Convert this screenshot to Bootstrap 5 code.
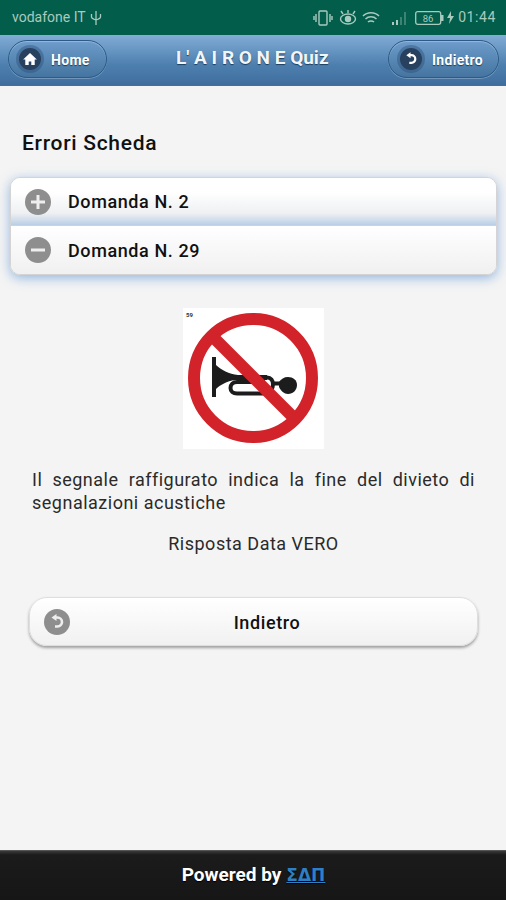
<!DOCTYPE html>
<html>
  <head>
    <title>L'AIRONE Quiz</title>
    <link href="https://cdn.jsdelivr.net/npm/bootstrap@5.3.3/dist/css/bootstrap.min.css" rel="stylesheet" />
    <style>
      body {
        width: 506px;
        height: 900px;
        overflow: hidden;
        background: #f4f4f4;
        font-family: Roboto, "Liberation Sans", sans-serif;
      }
      .status-strip {
        height: 35px;
        background: #025d4b;
        color: #a9cabf;
        font-size: 14px;
        padding: 0 10px 0 12px;
      }
      .status-strip svg { display: block; }
      .status-time { font-size: 14px; letter-spacing: .6px; }
      .status-vib { margin-left: 1px; }
      .status-eye { margin-left: 6px; }
      .status-wifi { margin-left: 5px; }
      .status-signal { margin-left: 11px; }
      .status-batt { margin-left: 6px; }
      .status-bolt { margin-left: 3px; }
      .top-bar {
        height: 51px;
        background: linear-gradient(#81add6, #4d7fae 60%, #3f6e9d);
        border-bottom: 1px solid #456f97;
        padding: 0 7px 3px 8px;
      }
      .bar-btn {
        height: 38px;
        border: 1px solid #2c5b88;
        border-radius: 19px;
        box-shadow: inset 0 1px 1px rgba(255,255,255,.3), 0 1px 0 rgba(255,255,255,.25);
        background: linear-gradient(#6d9ccb, #44749f);
        color: #fff;
        font-size: 14px;
        font-weight: 700;
        letter-spacing: .3px;
        text-shadow: 0 1px 1px #1c3d5c;
        padding: 0 16px 0 10px;
      }
      .bar-btn-right { padding: 0 15px 0 11px; }
      .bar-label { padding-top: 3px; }
      .dark-dot {
        width: 22px;
        height: 22px;
        border-radius: 50%;
        background: #27415f;
        box-shadow: 0 0 0 3px rgba(40,75,115,.4);
        flex: none;
        margin-right: 2px;
      }
      .bar-title {
        margin-left: 10px;
        color: #f2f6fa;
        font-size: 19px;
        font-weight: 700;
        text-shadow: 0 1px 1px #1c3d5c;
        white-space: nowrap;
      }
      .page-area { height: 764px; padding: 0 9px 0 10px; }
      .page-heading {
        margin: 0;
        padding: 45px 0 0 12px;
        height: 91px;
        font-size: 21px;
        font-weight: 500;
        letter-spacing: .7px;
        line-height: 24px;
        color: #111;
      }
      .quiz-list {
        border: 1px solid #d4d4d4;
        border-radius: 10px;
        box-shadow: 0 3px 12px rgba(80,140,210,.6);
        overflow: hidden;
      }
      .quiz-row {
        height: 48px;
        padding-left: 14px;
        font-size: 18px;
        font-weight: 500;
        letter-spacing: .6px;
        color: #111;
        background: linear-gradient(#fff, #f0f0f0);
      }
      .quiz-row-closed {
        background: linear-gradient(#fff 30%, #eef0f2 75%, #b9cfe6);
        border-bottom: 1px solid #c8d4e0;
      }
      .grey-dot {
        width: 26px;
        height: 26px;
        border-radius: 50%;
        background: #8e8e8e;
        flex: none;
        margin-right: 17px;
      }
      .sign-box {
        width: 141px;
        height: 141px;
        margin: 33px auto 0;
        background: #fff;
      }
      .sign-box svg { display: block; }
      .question-text {
        margin: 19px 22px 0;
        font-size: 18px;
        letter-spacing: .5px;
        line-height: 23px;
        text-align: justify;
        color: #2a2a2a;
        font-weight: 400;
      }
      .given-answer {
        margin: 18px 0 0;
        text-align: center;
        font-size: 18px;
        letter-spacing: .5px;
        line-height: 23px;
        color: #2a2a2a;
      }
      .back-wide {
        width: 449px;
        height: 49px;
        margin: 42px 0 0 19px;
        padding: 1px 13px 0 14px;
        border-radius: 18px;
        border: 1px solid #dedede;
        background: linear-gradient(#fff, #f1f1f1);
        box-shadow: 0 2px 3px rgba(0,0,0,.35);
        font-size: 18px;
        font-weight: 500;
        letter-spacing: .6px;
        color: #111;
      }
      .back-wide .grey-dot { margin: 0; }
      .back-label { flex: 1; text-align: center; }
      .bottom-bar {
        height: 50px;
        padding-left: 1px;
        background: linear-gradient(#3a3a3a, #1b1b1b 8%, #161616);
        border-top: 1px solid #555;
        color: #fff;
        font-size: 19px;
        font-weight: 700;
        text-shadow: 0 1px 1px #000;
      }
      .bottom-bar a { color: #2f7fc4; margin-left: 5px; font-family: "DejaVu Sans", sans-serif; font-size: 17px; }
    </style>
  </head>
  <body>
    <div class="status-strip d-flex align-items-center">
      <span>vodafone IT</span>
      <svg class="ms-1" width="12" height="16" viewBox="0 0 12 16" fill="none" stroke="#a9cabf" stroke-width="1.3"><path d="M6 1v14M1.500 4v3c0 1.500 4.500 3 4.500 3s4.500-1.500 4.500-3V4"/></svg>
      <div class="ms-auto d-flex align-items-center">
        <svg class="status-vib" width="20" height="16" viewBox="0 0 20 16" fill="none" stroke="#a9cabf" stroke-width="1.4"><rect x="6" y="1" width="8" height="14" rx="1"/><path d="M3 4v8M1 6v4M17 4v8M19 6v4"/></svg>
        <svg class="status-eye" width="18" height="16" viewBox="0 0 18 16" fill="none" stroke="#a9cabf" stroke-width="1.4"><ellipse cx="9" cy="9" rx="7.500" ry="5"/><circle cx="9" cy="9" r="2.500" fill="#a9cabf"/><path d="M4 4 2 1M9 3V0M14 4l2-3"/></svg>
        <svg class="status-wifi" width="18" height="16" viewBox="0 0 18 16" fill="none" stroke="#a9cabf" stroke-width="1.500"><path d="M1 6c4-4.500 12-4.500 16 0M3.500 9c3-3 8-3 11 0M6 12c1.500-1.500 4.500-1.500 6 0"/></svg>
        <svg class="status-signal" width="18" height="14" viewBox="0 0 18 14" fill="#a9cabf"><rect x="1" y="11" width="2" height="3"/><rect x="5" y="9" width="2" height="5"/><path d="M9 6h2v8H9zM13 1h2v13h-2z" opacity=".35"/></svg>
        <svg class="status-batt" width="29" height="14" viewBox="0 0 29 14"><rect x=".7" y=".7" width="25" height="12.600" rx="2" fill="none" stroke="#a9cabf" stroke-width="1.300"/><rect x="26" y="4" width="2.500" height="6" fill="#a9cabf"/><text x="13" y="10.500" font-size="9.500" text-anchor="middle" fill="#a9cabf" font-family="Roboto">86</text></svg>
        <svg class="status-bolt" width="7" height="13" viewBox="0 0 7 13" fill="#a9cabf"><path d="M4 0 0 7h3l-1 6 5-8H4z"/></svg>
        <span class="status-time ms-1">01:44</span>
      </div>
    </div>

    <div class="top-bar d-flex align-items-center justify-content-between">
      <div class="bar-btn d-flex align-items-center gap-2">
        <span class="dark-dot d-flex align-items-center justify-content-center">
          <svg width="14" height="12" viewBox="0 0 16 14" fill="#fff"><path d="M8 0 0 7.500h2.500V14h4v-4h3v4h4V7.500H16z"/></svg>
        </span>
        <span class="bar-label">Home</span>
      </div>
      <div class="bar-title">L' A I R O N E Quiz</div>
      <div class="bar-btn bar-btn-right d-flex align-items-center gap-2">
        <span class="dark-dot d-flex align-items-center justify-content-center">
          <svg width="12" height="14" viewBox="0 0 14 16" fill="none" stroke="#fff" stroke-width="2.600"><path d="M5 3.500h2.500a4.500 4.500 0 0 1 0 9H5"/><path d="M6.500 0 1.500 3.500l5 3.500z" fill="#fff" stroke="none"/></svg>
        </span>
        <span class="bar-label">Indietro</span>
      </div>
    </div>

    <div class="page-area">
      <h1 class="page-heading">Errori Scheda</h1>
      <div class="quiz-list">
        <div class="quiz-row quiz-row-closed d-flex align-items-center">
          <span class="grey-dot d-flex align-items-center justify-content-center">
            <svg width="16" height="16" viewBox="0 0 16 16" fill="#eee"><path d="M6.500 1h3v5.500H15v3H9.500V15h-3V9.500H1v-3h5.500z"/></svg>
          </span>
          <span>Domanda N. 2</span>
        </div>
        <div class="quiz-row d-flex align-items-center">
          <span class="grey-dot d-flex align-items-center justify-content-center">
            <svg width="16" height="16" viewBox="0 0 16 16" fill="#eee"><path d="M1 6.500h14v3H1z"/></svg>
          </span>
          <span>Domanda N. 29</span>
        </div>
      </div>

      <div class="sign-box">
        <svg width="141" height="141" viewBox="0 0 141 141">
          <text x="3" y="9" font-size="6" font-weight="700" fill="#333" font-family="Roboto">59</text>
          <circle cx="70" cy="70" r="59" fill="none" stroke="#d2232a" stroke-width="12"/>
          <path d="M29 49h4v8C38 62 46 66 55 67H84v5H52C44 73 37 77 33 81v8H29z" fill="#1c1c1c"/>
          <path d="M84 69.500c4 0 6 3 6 7s-3 9-8 9H54c-4 0-6.500-2-6.500-5.500s2.500-6 6.500-6h28M90 75.500h8" fill="none" stroke="#1c1c1c" stroke-width="4"/>
          <path d="M96 74c2-3 5-5 9-5 5 0 9 3 9 8s-4 9-9 9c-4 0-7-3-9-7z" fill="#1c1c1c"/>
          <path d="M30 29 110 109" stroke="#d2232a" stroke-width="12"/>
        </svg>
      </div>

      <p class="question-text">Il segnale raffigurato indica la fine del divieto di segnalazioni acustiche</p>
      <p class="given-answer">Risposta Data VERO</p>

      <div class="back-wide d-flex align-items-center">
        <span class="grey-dot d-flex align-items-center justify-content-center">
          <svg width="14" height="16" viewBox="0 0 14 16" fill="none" stroke="#eee" stroke-width="2.600"><path d="M5 3.500h2.500a4.500 4.500 0 0 1 0 9H5"/><path d="M6.500 0 1.500 3.500l5 3.500z" fill="#eee" stroke="none"/></svg>
        </span>
        <span class="back-label">Indietro</span>
      </div>
    </div>

    <div class="bottom-bar d-flex align-items-center justify-content-center">
      <span>Powered by</span>
      <a href="#">ΣΔΠ</a>
    </div>
    <script src="https://cdn.jsdelivr.net/npm/bootstrap@5.3.3/dist/js/bootstrap.bundle.min.js"></script>
  </body>
</html>
